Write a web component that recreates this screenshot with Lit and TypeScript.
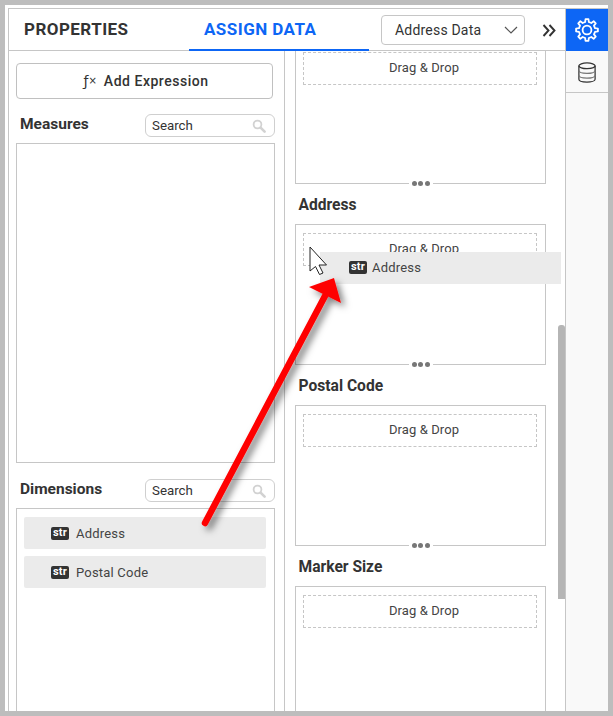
import { LitElement, html, css, svg } from "lit";
import { customElement } from "lit/decorators.js";

const searchIcon = svg`<svg class="sicon" width="14" height="14" viewBox="0 0 14 14"><circle cx="5.5" cy="5.5" r="3.9" fill="none" stroke="#d2d2d2" stroke-width="1.8"/><path d="M8.6 8.6L12.6 12.6" stroke="#d2d2d2" stroke-width="2.6" stroke-linecap="round"/></svg>`;

function gearPath(): string {
  const teeth = 8;
  const cx = 12, cy = 12, outer = 11, root = 8.2;
  const step = (Math.PI * 2) / teeth;
  const pt = (r: number, a: number) => `${(cx + r * Math.cos(a)).toFixed(2)} ${(cy + r * Math.sin(a)).toFixed(2)}`;
  let d = "";
  for (let i = 0; i < teeth; i++) {
    const a = i * step - Math.PI / 2;
    const cmds = [
      [root, a - step * 0.29],
      [outer, a - step * 0.17],
      [outer, a + step * 0.17],
      [root, a + step * 0.29],
    ];
    cmds.forEach(([r, an], j) => {
      d += `${i === 0 && j === 0 ? "M" : "L"}${pt(r, an)}`;
    });
  }
  return d + "Z";
}

@customElement("app-root")
export class AppRoot extends LitElement {
  static styles = css`
    :host { display: block; width: 613px; height: 716px; box-sizing: border-box; padding: 5px; background: #bdbdbd; position: relative; overflow: hidden; font-family: Roboto, sans-serif; color: #333; }
    * { box-sizing: border-box; }
    .frame { height: 706px; background: #fff; padding: 3px 0 0 3px; }
    .shell { height: 703px; display: flex; border-left: 1px solid #c6c6c6; border-top: 1px solid #c6c6c6; overflow: hidden; }
    .main { width: 556px; display: flex; flex-direction: column; }
    .header { height: 42px; flex: none; display: flex; border-bottom: 1px solid #c6c6c6; }
    .tab { width: 180px; height: 42px; font-size: 17px; font-weight: 700; letter-spacing: 0.45px; line-height: 41px; padding-left: 15px; }
    .tab.props { color: #333; }
    .tab.assign { color: #0d66f5; border-bottom: 2px solid #0d66f5; }
    .select { width: 144px; height: 30px; margin: 6px 0 0 12px; border: 1px solid #c6c6c6; border-radius: 4px; display: flex; align-items: center; justify-content: space-between; padding: 0 0 0 13px; font-size: 14px; letter-spacing: 0.2px; }
    .select svg { margin-right: 6px; }
    .expand { margin: 15px 0 0 17px; }
    .body { flex: 1; display: flex; min-height: 0; }
    .left { width: 276px; flex: none; border-right: 1px solid #c6c6c6; padding: 12px 0 0 7px; display: flex; flex-direction: column; }
    .btn { width: 257px; height: 36px; flex: none; border: 1px solid #c0c0c0; border-radius: 4px; display: flex; align-items: center; justify-content: center; gap: 7px; padding-left: 3px; font-size: 14px; font-weight: 500; letter-spacing: 0.52px; }
    .fx { font-family: "DejaVu Sans", sans-serif; font-size: 14px; letter-spacing: 0; font-weight: 400; }
    .fx small { font-size: 10px; vertical-align: 2px; }
    .head { display: flex; justify-content: space-between; width: 259px; height: 23px; flex: none; padding-left: 4px; }
    .head.m { margin-top: 15px; }
    .head.d { margin-top: 16px; }
    .head b { font-size: 15.5px; font-weight: 700; line-height: 20px; }
    .search { width: 130px; height: 23px; border: 1px solid #cfcfcf; border-radius: 6px; padding: 0 8px 0 6px; display: flex; align-items: center; justify-content: space-between; font-size: 13.3px; line-height: 20px; }
    .well { width: 259px; border: 1px solid #c6c6c6; margin-top: 6px; flex: none; }
    .well.m { height: 320px; }
    .well.d { flex: 1; border-bottom: 0; padding: 8px 8px 0 7px; display: flex; flex-direction: column; gap: 7px; }
    .item { height: 32px; background: #ebebeb; border-radius: 2px; display: flex; align-items: center; padding-left: 27px; gap: 7px; font-size: 13px; letter-spacing: 0.2px; color: #444; }
    .badge { width: 18px; height: 13px; background: #333; border-radius: 2px; color: #fff; font-size: 11px; font-weight: 700; line-height: 12px; text-align: center; letter-spacing: 0.2px; flex: none; }
    .right { flex: 1; position: relative; overflow: hidden; padding-left: 10px; }
    .list { margin-top: -8px; }
    .label { height: 40px; padding: 11px 0 0 3.5px; font-size: 15.6px; font-weight: 700; line-height: 20px; }
    .drop { width: 251px; height: 141px; border: 1px solid #c6c6c6; padding: 8px 8px 8px 7px; position: relative; background: #fff; }
    .zone { height: 33px; border: 1px dashed #c6c6c6; padding-left: 8px; font-size: 13px; line-height: 30px; text-align: center; color: #444; letter-spacing: 0.1px; }
    .grip { position: absolute; left: 50%; bottom: -4px; transform: translateX(-50%); width: 24px; height: 7px; padding: 0 3px; background: #fff; display: flex; justify-content: space-between; align-items: center; }
    .grip i { width: 5px; height: 5px; border-radius: 50%; background: #777; }
    .thumb { position: absolute; right: 0; top: 274px; width: 7px; height: 274px; background: #b5b5b5; border-radius: 3px 3px 0 0; }
    .side { flex: 1; background: #f9f9f9; border-left: 1px solid #c6c6c6; margin-left: 0; }
    .cell { height: 42px; display: flex; align-items: center; justify-content: center; }
    .cell.on { background: #0d66f5; }
    .cell.db { height: 42px; border-bottom: 1px solid #c6c6c6; padding-top: 1px; }
    .ghost { position: absolute; left: 320px; top: 252px; width: 241px; height: 32px; background: #ebebeb; display: flex; align-items: center; padding: 0 0 1px 29px; gap: 5px; font-size: 13px; letter-spacing: 0.2px; color: #444; }
    .overlay { position: absolute; left: 0; top: 0; pointer-events: none; }
  `;

  private drop(last = false) {
    return html`<div class="drop"><div class="zone">Drag &amp; Drop</div>${last ? "" : html`<div class="grip"><i></i><i></i><i></i></div>`}</div>`;
  }

  render() {
    return html`
      <div class="frame"><div class="shell">
        <div class="main">
          <div class="header">
            <div class="tab props">PROPERTIES</div>
            <div class="tab assign">ASSIGN DATA</div>
            <div class="select">Address Data
              <svg width="14" height="8" viewBox="0 0 14 8"><path d="M1 1L7 7L13 1" fill="none" stroke="#555" stroke-width="1.2"/></svg>
            </div>
            <svg class="expand" width="14" height="13" viewBox="0 0 14 13"><path d="M1.500 1L6.500 6.500L1.500 12M7.500 1L12.500 6.500L7.500 12" fill="none" stroke="#333" stroke-width="1.9"/></svg>
          </div>
          <div class="body">
            <div class="left">
              <div class="btn"><span class="fx">ƒ<small>×</small></span><span>Add Expression</span></div>
              <div class="head m"><b>Measures</b><div class="search">Search ${searchIcon}</div></div>
              <div class="well m"></div>
              <div class="head d"><b>Dimensions</b><div class="search">Search ${searchIcon}</div></div>
              <div class="well d">
                <div class="item"><span class="badge">str</span>Address</div>
                <div class="item"><span class="badge">str</span>Postal Code</div>
              </div>
            </div>
            <div class="right">
              <div class="list">
                ${this.drop()}
                <div class="label">Address</div>
                ${this.drop()}
                <div class="label">Postal Code</div>
                ${this.drop()}
                <div class="label">Marker Size</div>
                ${this.drop(true)}
              </div>
              <div class="thumb"></div>
            </div>
          </div>
        </div>
        <div class="side">
          <div class="cell on">
            <svg width="24" height="24" viewBox="0 0 24 24" fill="none" stroke="#fff" stroke-width="1.8" stroke-linejoin="round"><path d="${gearPath()}"/><circle cx="12" cy="12" r="4.400"/></svg>
          </div>
          <div class="cell db">
            <svg width="20" height="21" viewBox="0 0 20 22" fill="none" stroke="#333" stroke-width="1.3"><ellipse cx="10" cy="4" rx="8.500" ry="3"/><path d="M1.500 4V18C1.500 19.700 5.300 21 10 21S18.500 19.700 18.500 18V4"/><path d="M1.500 9C1.500 10.700 5.300 12 10 12S18.500 10.700 18.500 9M1.500 14C1.500 15.700 5.300 17 10 17S18.500 15.700 18.500 14" stroke="#777"/></svg>
          </div>
        </div>
      </div></div>
      <div class="ghost"><span class="badge">str</span><span>Address</span></div>
      <svg class="overlay" width="613" height="716" viewBox="0 0 613 716">
        <defs><filter id="s" x="-30%" y="-30%" width="160%" height="160%"><feDropShadow dx="4" dy="4" stdDeviation="3.500" flood-color="#000" flood-opacity="0.5"/></filter></defs>
        <g filter="url(#s)" fill="#fe0000">
          <path d="M205 523L325 296" stroke="#fe0000" stroke-width="6.500" stroke-linecap="round"/>
          <path d="M309 287L334 278L341 303Z"/>
        </g>
        <path d="M310 247V271L315.500 266.500L319.500 274.500L323 273L319 265L326.500 265Z" fill="#fff" stroke="#222" stroke-width="1"/>
      </svg>
    `;
  }
}
